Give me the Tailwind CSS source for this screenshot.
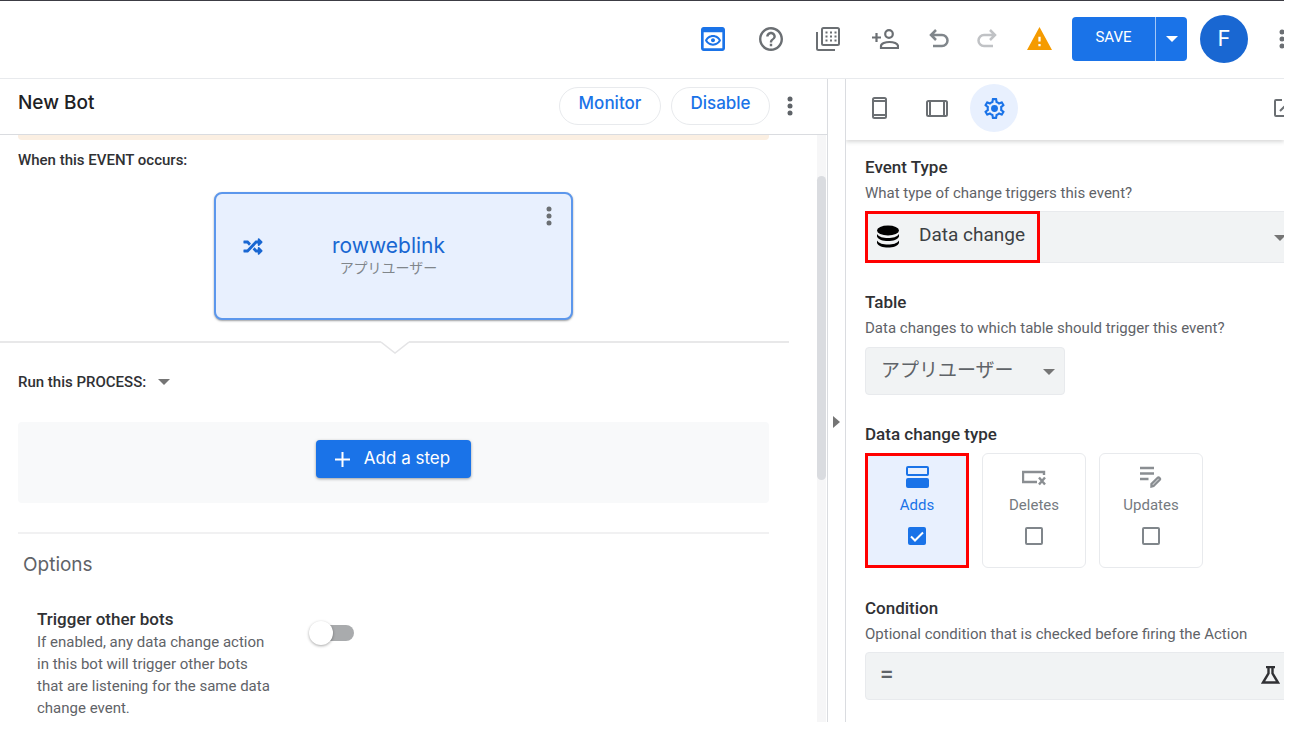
<!DOCTYPE html>
<html lang="en">
<head>
<meta charset="utf-8">
<meta name="viewport" content="width=device-width, initial-scale=1">
<title>New Bot</title>
<script src="https://cdn.jsdelivr.net/npm/@tailwindcss/browser@4"></script>
</head>
<body class="bg-white font-['Roboto','Noto_Sans_CJK_JP',sans-serif] text-[#303134]">
<div class="flex h-screen flex-col overflow-hidden pr-4 pb-[9px]">

  <!-- Top toolbar -->
  <header class="flex h-[79px] shrink-0 items-center justify-end overflow-hidden border-t border-b border-t-[#3c3c44] border-b-[#e8eaed] pb-0.5 text-[#6b6f73]">
    <div class="flex items-center">
      <button class="mr-[34px] text-[#1a73e8]" aria-label="Preview">
        <svg class="size-6" viewBox="3 3 18 18" fill="currentColor"><path d="M19,3H5C3.89,3,3,3.9,3,5v14c0,1.1,0.89,2,2,2h14c1.1,0,2-0.9,2-2V5C21,3.9,20.11,3,19,3z M19,19H5V7h14V19z M12,10.5c1.84,0,3.48,0.96,4.34,2.5c-0.86,1.54-2.5,2.5-4.34,2.5S8.52,14.54,7.66,13C8.52,11.46,10.16,10.5,12,10.5 M12,9c-2.73,0-5.06,1.66-6,4c0.94,2.34,3.27,4,6,4s5.06-1.66,6-4C17.06,10.66,14.73,9,12,9z M12,14.5c-0.83,0-1.5-0.67-1.5-1.5s0.67-1.5,1.5-1.5s1.5,0.67,1.5,1.5S12.83,14.5,12,14.5z"/></svg>
      </button>
      <button class="mr-[33px]" aria-label="Help">
        <svg class="size-6" viewBox="2 2 20 20" fill="currentColor"><path d="M11 18h2v-2h-2v2zm1-16C6.48 2 2 6.48 2 12s4.48 10 10 10 10-4.48 10-10S17.52 2 12 2zm0 18c-4.41 0-8-3.59-8-8s3.59-8 8-8 8 3.59 8 8-3.59 8-8 8zm0-14c-2.21 0-4 1.79-4 4h2c0-1.1.9-2 2-2s2 .9 2 2c0 2-3 1.75-3 5h2c0-2.25 3-2.5 3-5 0-2.21-1.79-4-4-4z"/></svg>
      </button>
      <button class="mr-8" aria-label="Apps">
        <svg class="size-6" viewBox="0 0 24 24" fill="none" stroke="currentColor" stroke-width="2"><rect x="6" y="1" width="17" height="17" rx="1.5"/><path d="M1 5v16.500q0 1.500 1.500 1.500H19"/><path d="M9.500 5.500h11M9.500 9.500h11M9.500 13.500h11" stroke-dasharray="2 2.500"/></svg>
      </button>
      <button class="mr-[30px]" aria-label="Add person">
        <svg class="h-5 w-[27px]" viewBox="0 0 27 20" fill="none" stroke="currentColor" stroke-width="2.200"><path d="M0 8.500h9M4.500 4v9"/><circle cx="17" cy="5" r="3.800"/><path d="M9 19v-2c0-2.500 4.500-4 8.500-4s8.500 1.500 8.500 4v2z"/></svg>
      </button>
      <button class="mr-7 text-[#80868b]" aria-label="Undo">
        <svg class="size-5" viewBox="0 0 20 20" fill="none" stroke="currentColor" stroke-width="2.500"><path d="M7 1 2 6l5 5M2 6h11a5.500 5.500 0 0 1 0 11H4"/></svg>
      </button>
      <button class="mr-[30px] text-[#c0c2c5]" aria-label="Redo">
        <svg class="size-5" viewBox="0 0 20 20" fill="none" stroke="currentColor" stroke-width="2.500"><path d="M13 1l5 5-5 5M18 6H7a5.500 5.500 0 0 0 0 11h9"/></svg>
      </button>
      <button class="mr-5 text-[#f59b00]" aria-label="Warnings">
        <svg class="h-[23px] w-[25px]" viewBox="1 2 22 19" preserveAspectRatio="none" fill="currentColor"><path d="M1 21h22L12 2 1 21zm12-3h-2v-2h2v2zm0-4h-2v-4h2v4z"/></svg>
      </button>
      <div class="mr-[13px] flex h-[44px] overflow-hidden rounded bg-[#1a73e8] text-white">
        <button class="w-[83px] pb-0.5 text-[15px]">SAVE</button>
        <button class="flex w-8 items-center justify-center border-l border-[#a3c7f7]" aria-label="More save options">
          <svg class="h-1.5 w-3" viewBox="0 0 12 6" fill="currentColor"><path d="M0 0h12L6 6z"/></svg>
        </button>
      </div>
      <button class="mr-[31px] size-12 rounded-full bg-[#1967d2] font-['Inter',sans-serif] text-[22px] text-white" aria-label="Account F">F</button>
      <button class="-mr-[1px]" aria-label="More">
        <svg class="h-5 w-1.5" viewBox="0 0 6 20" fill="currentColor"><circle cx="3" cy="3" r="2.500"/><circle cx="3" cy="10" r="2.500"/><circle cx="3" cy="17" r="2.500"/></svg>
      </button>
    </div>
  </header>

  <div class="flex min-h-0 flex-1">
    <!-- Bot editor -->
    <main class="flex min-w-0 flex-1 flex-col border-r border-[#dadce0]">
      <div class="flex h-14 shrink-0 items-center border-b border-[#dadce0] pr-[34px] pb-0.5 pl-[18px] font-['Inter',sans-serif] font-medium">
        <h1 class="flex-1 pb-1 text-[19px] text-[#202124]">New Bot</h1>
        <button class="mr-2.5 h-[38px] w-[102px] rounded-full border border-[#e8eaed] pb-1 text-[17px] text-[#1a73e8]">Monitor</button>
        <button class="mr-[17px] h-[38px] w-[99px] rounded-full border border-[#e8eaed] pb-1 text-[17px] text-[#1a73e8]">Disable</button>
        <button class="text-[#5f6368]" aria-label="Bot menu">
          <svg class="h-5 w-1.5" viewBox="0 0 6 20" fill="currentColor"><circle cx="3" cy="3" r="2.500"/><circle cx="3" cy="10" r="2.500"/><circle cx="3" cy="17" r="2.500"/></svg>
        </button>
      </div>

      <div class="flex min-h-0 flex-1 pr-px">
        <div class="min-w-0 flex-1 overflow-hidden">
          <div class="mr-12 ml-[18px] h-[5px] rounded-b bg-[#fbefe2]"></div>
          <h2 class="mt-2.5 pl-[18px] text-[15px] leading-5 font-medium">When this EVENT occurs:</h2>

          <div class="mt-[22px] mr-[30px] flex justify-center">
            <div class="grid h-32 w-[359px] grid-cols-[1fr_140px_1fr] rounded-lg border-2 border-[#5c97ec] bg-[#e8f0fe] shadow-[0_1px_2px_rgba(60,64,67,0.5)]">
              <svg class="mt-11 ml-[27px] h-[17px] w-5 text-[#1967d2]" viewBox="0 28 512 456" fill="currentColor"><path d="M504.971 359.029c9.373 9.373 9.373 24.569 0 33.941l-80 79.984c-15.01 15.01-40.971 4.49-40.971-16.971V416h-58.785a12.004 12.004 0 0 1-8.773-3.812l-70.556-75.596 53.333-57.143L352 336h32v-39.981c0-21.438 25.943-31.998 40.971-16.971l80 79.981zM12 176h84l52.781 56.551 53.333-57.143-70.556-75.596A11.999 11.999 0 0 0 122.785 96H12c-6.627 0-12 5.373-12 12v56c0 6.627 5.373 12 12 12zm372 0v39.984c0 21.460 25.961 31.980 40.971 16.971l80-79.984c9.373-9.373 9.373-24.569 0-33.941l-80-79.981C409.943 24.021 384 34.582 384 56.019V96h-58.785a12.004 12.004 0 0 0-8.773 3.812L96 336H12c-6.627 0-12 5.373-12 12v56c0 6.627 5.373 12 12 12h110.785c3.326 0 6.503-1.381 8.773-3.812L352 176h32z"/></svg>
              <div class="pt-10 pr-2.5 text-center">
                <div class="font-['Inter',sans-serif] text-[21px] leading-6 text-[#1967d2]">rowweblink</div>
                <div class="text-[14px] leading-5 text-[#80868b]">アプリユーザー</div>
              </div>
              <button class="mt-3 mr-[19px] self-start justify-self-end text-[#6b6f73]" aria-label="Event menu">
                <svg class="h-5 w-1.5" viewBox="0 0 6 20" fill="currentColor"><circle cx="3" cy="3" r="2.500"/><circle cx="3" cy="10" r="2.500"/><circle cx="3" cy="17" r="2.500"/></svg>
              </button>
            </div>
          </div>

          <!-- Divider with a notch that points at the process -->
          <div class="mt-[21px] mr-7 flex">
            <div class="h-0.5 flex-1 bg-[#e8e8e9]"></div>
            <svg class="h-3.5 w-7" viewBox="0 0 28 14" fill="none" stroke="#e4e4e6" stroke-width="1.500"><path d="M0 1 14 12 28 1"/></svg>
            <div class="h-0.5 flex-1 bg-[#e8e8e9]"></div>
          </div>

          <button class="mt-[17px] ml-[18px] flex items-center text-[15px] leading-5 font-medium">Run this PROCESS:
            <svg class="ml-3 h-1.5 w-3 text-[#757575]" viewBox="0 0 12 6" fill="currentColor"><path d="M0 0h12L6 6z"/></svg>
          </button>

          <div class="mt-[30px] mr-12 ml-[18px] flex h-[81px] items-start justify-center rounded bg-[#f8f9fa] pt-[18px]">
            <button class="flex h-[38px] w-[155px] items-center justify-center rounded bg-[#1a73e8] pr-0.5 font-['Inter',sans-serif] text-[17px] text-white shadow-[0_1px_3px_rgba(60,64,67,0.5)]">
              <svg class="mr-3.5 size-[15px]" viewBox="0 0 15 15" fill="none" stroke="currentColor" stroke-width="2"><path d="M7.500 0v15M0 7.500h15"/></svg>Add a step
            </button>
          </div>

          <hr class="mt-[29px] mr-12 ml-[18px] border-t-2 border-[#f1f1f2]">

          <h2 class="mt-[19px] pl-[23px] font-['Inter',sans-serif] text-[19px] leading-6 text-[#5f6368]">Options</h2>
          <div class="mt-[30px] flex items-start pl-[37px]">
            <div class="w-[271px] pr-[34px]">
              <h3 id="trigger-title" class="text-[17px] leading-6 font-medium">Trigger other bots</h3>
              <p class="text-[15px] leading-[22px] text-[#5f6368]">If enabled, any data change action in this bot will trigger other bots that are listening for the same data change event.</p>
            </div>
            <label class="mt-[18px] flex items-center rounded-full pl-1">
              <input type="checkbox" role="switch" aria-labelledby="trigger-title" class="h-4 w-[42px] appearance-none rounded-full bg-[#a9abad] before:-mt-1 before:-ml-[3px] before:block before:size-6 before:rounded-full before:bg-white before:shadow-[0_1px_3px_rgba(0,0,0,0.35)]">
            </label>
          </div>
        </div>

        <div class="w-[9px] shrink-0 bg-[#f6f6f7] pt-[41px]">
          <div class="h-[304px] rounded-full bg-[#dadce0]"></div>
        </div>
      </div>
    </main>

    <div class="flex w-[17px] shrink-0 items-center justify-center pt-[43px]">
      <button aria-label="Collapse panel"><svg class="h-3 w-[7px] text-[#757575]" viewBox="0 0 7 12" fill="currentColor"><path d="M0 0v12l7-6z"/></svg></button>
    </div>

    <!-- Settings panel -->
    <aside class="w-[439px] shrink-0 overflow-hidden border-l border-[#dadce0]">
      <div class="flex h-[61px] items-center pb-[3px] pl-[26px] text-[#6b6f73] shadow-[0_2px_4px_rgba(60,64,67,0.2)]">
        <button class="mr-[39px]" aria-label="Phone"><svg class="h-[22px] w-[15px]" viewBox="0 0 15 22" fill="none" stroke="currentColor" stroke-width="2"><rect x="1" y="1" width="13" height="20" rx="1.500"/><path d="M1 4h13M1 18h13"/></svg></button>
        <button class="mr-[22px]" aria-label="Tablet"><svg class="h-[17px] w-[22px]" viewBox="0 0 22 17" fill="none" stroke="currentColor" stroke-width="2"><rect x="1" y="1" width="20" height="15" rx="1.500"/><path d="M4 1v15M18 1v15"/></svg></button>
        <button class="flex size-12 items-center justify-center rounded-full bg-[#e8f0fe] text-[#1a73e8]" aria-label="Settings">
          <svg class="size-[25px]" viewBox="0 0 24 24" fill="currentColor"><path d="M19.430 12.980c.04-.32.07-.64.07-.98s-.03-.66-.07-.98l2.110-1.650c.19-.15.24-.42.12-.64l-2-3.460c-.09-.16-.26-.25-.44-.25-.06 0-.12.010-.17.030l-2.490 1c-.52-.4-1.080-.73-1.690-.98l-.38-2.650C14.460 2.180 14.250 2 14 2h-4c-.25 0-.46.18-.49.42l-.38 2.650c-.61.25-1.170.59-1.690.98l-2.490-1c-.06-.02-.12-.03-.18-.03-.17 0-.34.09-.43.25l-2 3.460c-.13.22-.07.49.12.64l2.110 1.650c-.04.32-.07.65-.07.98s.03.66.07.98l-2.110 1.650c-.19.15-.24.42-.12.64l2 3.460c.09.16.26.25.44.25.06 0 .12-.01.17-.03l2.490-1c.52.4 1.080.73 1.690.98l.38 2.650c.03.24.24.42.49.42h4c.25 0 .46-.18.49-.42l.38-2.650c.61-.25 1.170-.59 1.690-.98l2.490 1c.06.02.12.03.18.03.17 0 .34-.09.43-.25l2-3.460c.12-.22.07-.49-.12-.64l-2.110-1.650zm-1.980-1.710c.04.31.05.52.05.73 0 .21-.02.43-.05.73l-.14 1.130.89.7 1.080.84-.7 1.210-1.270-.51-1.040-.42-.9.68c-.43.32-.84.56-1.250.73l-1.060.43-.16 1.130-.2 1.350h-1.400l-.19-1.350-.16-1.130-1.060-.43c-.43-.18-.83-.41-1.230-.71l-.91-.7-1.060.43-1.270.51-.7-1.210 1.080-.84.89-.7-.14-1.130c-.03-.31-.05-.54-.05-.74s.02-.43.05-.73l.14-1.130-.89-.7-1.080-.84.7-1.210 1.270.51 1.040.42.9-.68c.43-.32.84-.56 1.250-.73l1.060-.43.16-1.130.2-1.350h1.390l.19 1.350.16 1.130 1.060.43c.43.18.83.41 1.230.71l.91.7 1.060-.43 1.270-.51.7 1.210-1.070.85-.89.7.14 1.130z"/><circle cx="12" cy="12" r="3.300"/></svg>
        </button>
        <button class="-mr-[9px] ml-auto shrink-0" aria-label="Open in new tab"><svg class="size-5" viewBox="0 0 20 20" fill="none" stroke="currentColor" stroke-width="2"><path d="M9 2H3q-1 0-1 1v14q0 1 1 1h14q1 0 1-1v-6M12 2h6v6M18 2 7 13"/></svg></button>
      </div>

      <div class="pt-[15px] pl-[19px]">
        <section>
          <label for="event-type" class="block text-[17px] leading-6 font-medium">Event Type</label>
          <p class="mt-1 text-[15px] leading-5 text-[#5f6368]">What type of change triggers this event?</p>
          <div class="relative mt-2 -mr-4">
            <select id="event-type" class="h-[52px] w-full appearance-none border-y border-[#e8eaed] bg-[#f1f3f4] pb-1 pl-[54px] text-[19px] text-[#3c4043]"><option>Data change</option></select>
            <svg class="pointer-events-none absolute top-3.5 left-3 h-[23px] w-[22px] text-black" viewBox="0 0 22 23" fill="currentColor"><ellipse cx="11" cy="5.500" rx="11" ry="5"/><path d="M0 9c2 3 6 4 11 4s9-1 11-4v2.500c-1 3.200-6 4.500-11 4.500S1 14.700 0 11.500zM0 15.500c2 3 6 4 11 4s9-1 11-4V18c-1 3.200-6 4.500-11 4.500S1 21.200 0 18z"/></svg>
            <svg class="pointer-events-none absolute top-6 right-3.5 h-1.5 w-3 text-[#757575]" viewBox="0 0 12 6" fill="currentColor"><path d="M0 0h12L6 6z"/></svg>
            <div class="pointer-events-none absolute top-0 left-0 h-[52px] w-[175px] border-3 border-[#ff0000]"></div>
          </div>
        </section>

        <section class="mt-[27px]">
          <label for="table" class="block text-[17px] leading-6 font-medium">Table</label>
          <p class="mt-1 text-[15px] leading-5 text-[#5f6368]">Data changes to which table should trigger this event?</p>
          <div class="relative mt-[9px] w-[200px]">
            <select id="table" class="block h-12 w-full appearance-none rounded border border-[#e8eaed] bg-[#f1f3f4] pl-[15px] text-[19px] text-[#5f6368]"><option>アプリユーザー</option></select>
            <svg class="pointer-events-none absolute top-[22px] right-2.5 h-1.5 w-3 text-[#757575]" viewBox="0 0 12 6" fill="currentColor"><path d="M0 0h12L6 6z"/></svg>
          </div>
        </section>

        <fieldset class="mt-[27px]">
          <legend class="text-[17px] leading-6 font-medium">Data change type</legend>
          <div class="mt-[7px] flex gap-[13px] text-[15px] leading-5 text-[#757a7f]">
            <label class="flex h-[115px] w-[104px] flex-col items-center border-3 border-[#ff0000] bg-[#e8f0fe] pt-2.5 text-[#1a73e8]">
              <svg class="h-[22px] w-[23px]" viewBox="0 0 23 22" fill="currentColor"><rect x="1" y="1" width="21" height="8" rx="1" fill="none" stroke="currentColor" stroke-width="2"/><rect y="12" width="23" height="10" rx="2"/></svg>
              <span class="mt-[7px]">Adds</span>
              <span class="mt-3 grid">
                <input type="checkbox" checked class="col-start-1 row-start-1 size-[18px] appearance-none rounded-xs bg-[#1a73e8]">
                <svg class="pointer-events-none col-start-1 row-start-1 size-[18px]" viewBox="0 0 18 18" fill="none" stroke="#fff" stroke-width="2"><path d="m3 9.500 4 4 8-8"/></svg>
              </span>
            </label>
            <label class="flex h-[115px] w-[104px] flex-col items-center rounded-md border border-[#e8eaed] pt-3">
              <svg class="h-[22px] w-6" viewBox="0 0 24 22" fill="none" stroke="#8a8e92" stroke-width="2.400"><path d="M22 9V6H1v10h14M17 11.500l6 7M23 11.500l-6 7"/></svg>
              <span class="mt-[7px]">Deletes</span>
              <input type="checkbox" class="mt-3 size-[18px] appearance-none rounded-xs border-2 border-[#80868b]">
            </label>
            <label class="flex h-[115px] w-[104px] flex-col items-center rounded-md border border-[#e8eaed] pt-3">
              <svg class="h-[22px] w-[22px]" viewBox="0 0 22 22" fill="none" stroke="#8a8e92" stroke-width="2.400"><path d="M0 2h14M0 7.500h14M0 13h8.500M11.500 20.500v-2.500l6-6q1-1 2 0t0 2l-6 6z"/></svg>
              <span class="mt-[7px]">Updates</span>
              <input type="checkbox" class="mt-3 size-[18px] appearance-none rounded-xs border-2 border-[#80868b]">
            </label>
          </div>
        </fieldset>

        <section class="mt-7">
          <label for="condition" class="block text-[17px] leading-6 font-medium">Condition</label>
          <p class="mt-1 text-[15px] leading-5 text-[#5f6368]">Optional condition that is checked before firing the Action</p>
          <div class="relative mt-2 -mr-4">
            <input id="condition" type="text" value="=" class="block h-12 w-full rounded border border-[#e8eaed] bg-[#f1f3f4] pb-1 pl-3.5 text-[24px] font-medium text-[#5f6368]">
            <button class="absolute top-3.5 right-5" aria-label="Test expression"><svg class="h-[18px] w-[19px] text-[#303134]" viewBox="0 0 19 18" fill="none" stroke="currentColor" stroke-width="2.400"><path d="M5 1h9M7.500 1v6.500L2 16.500h15L11.500 7.500V1"/></svg></button>
          </div>
        </section>
      </div>
    </aside>
  </div>
</div>
</body>
</html>
